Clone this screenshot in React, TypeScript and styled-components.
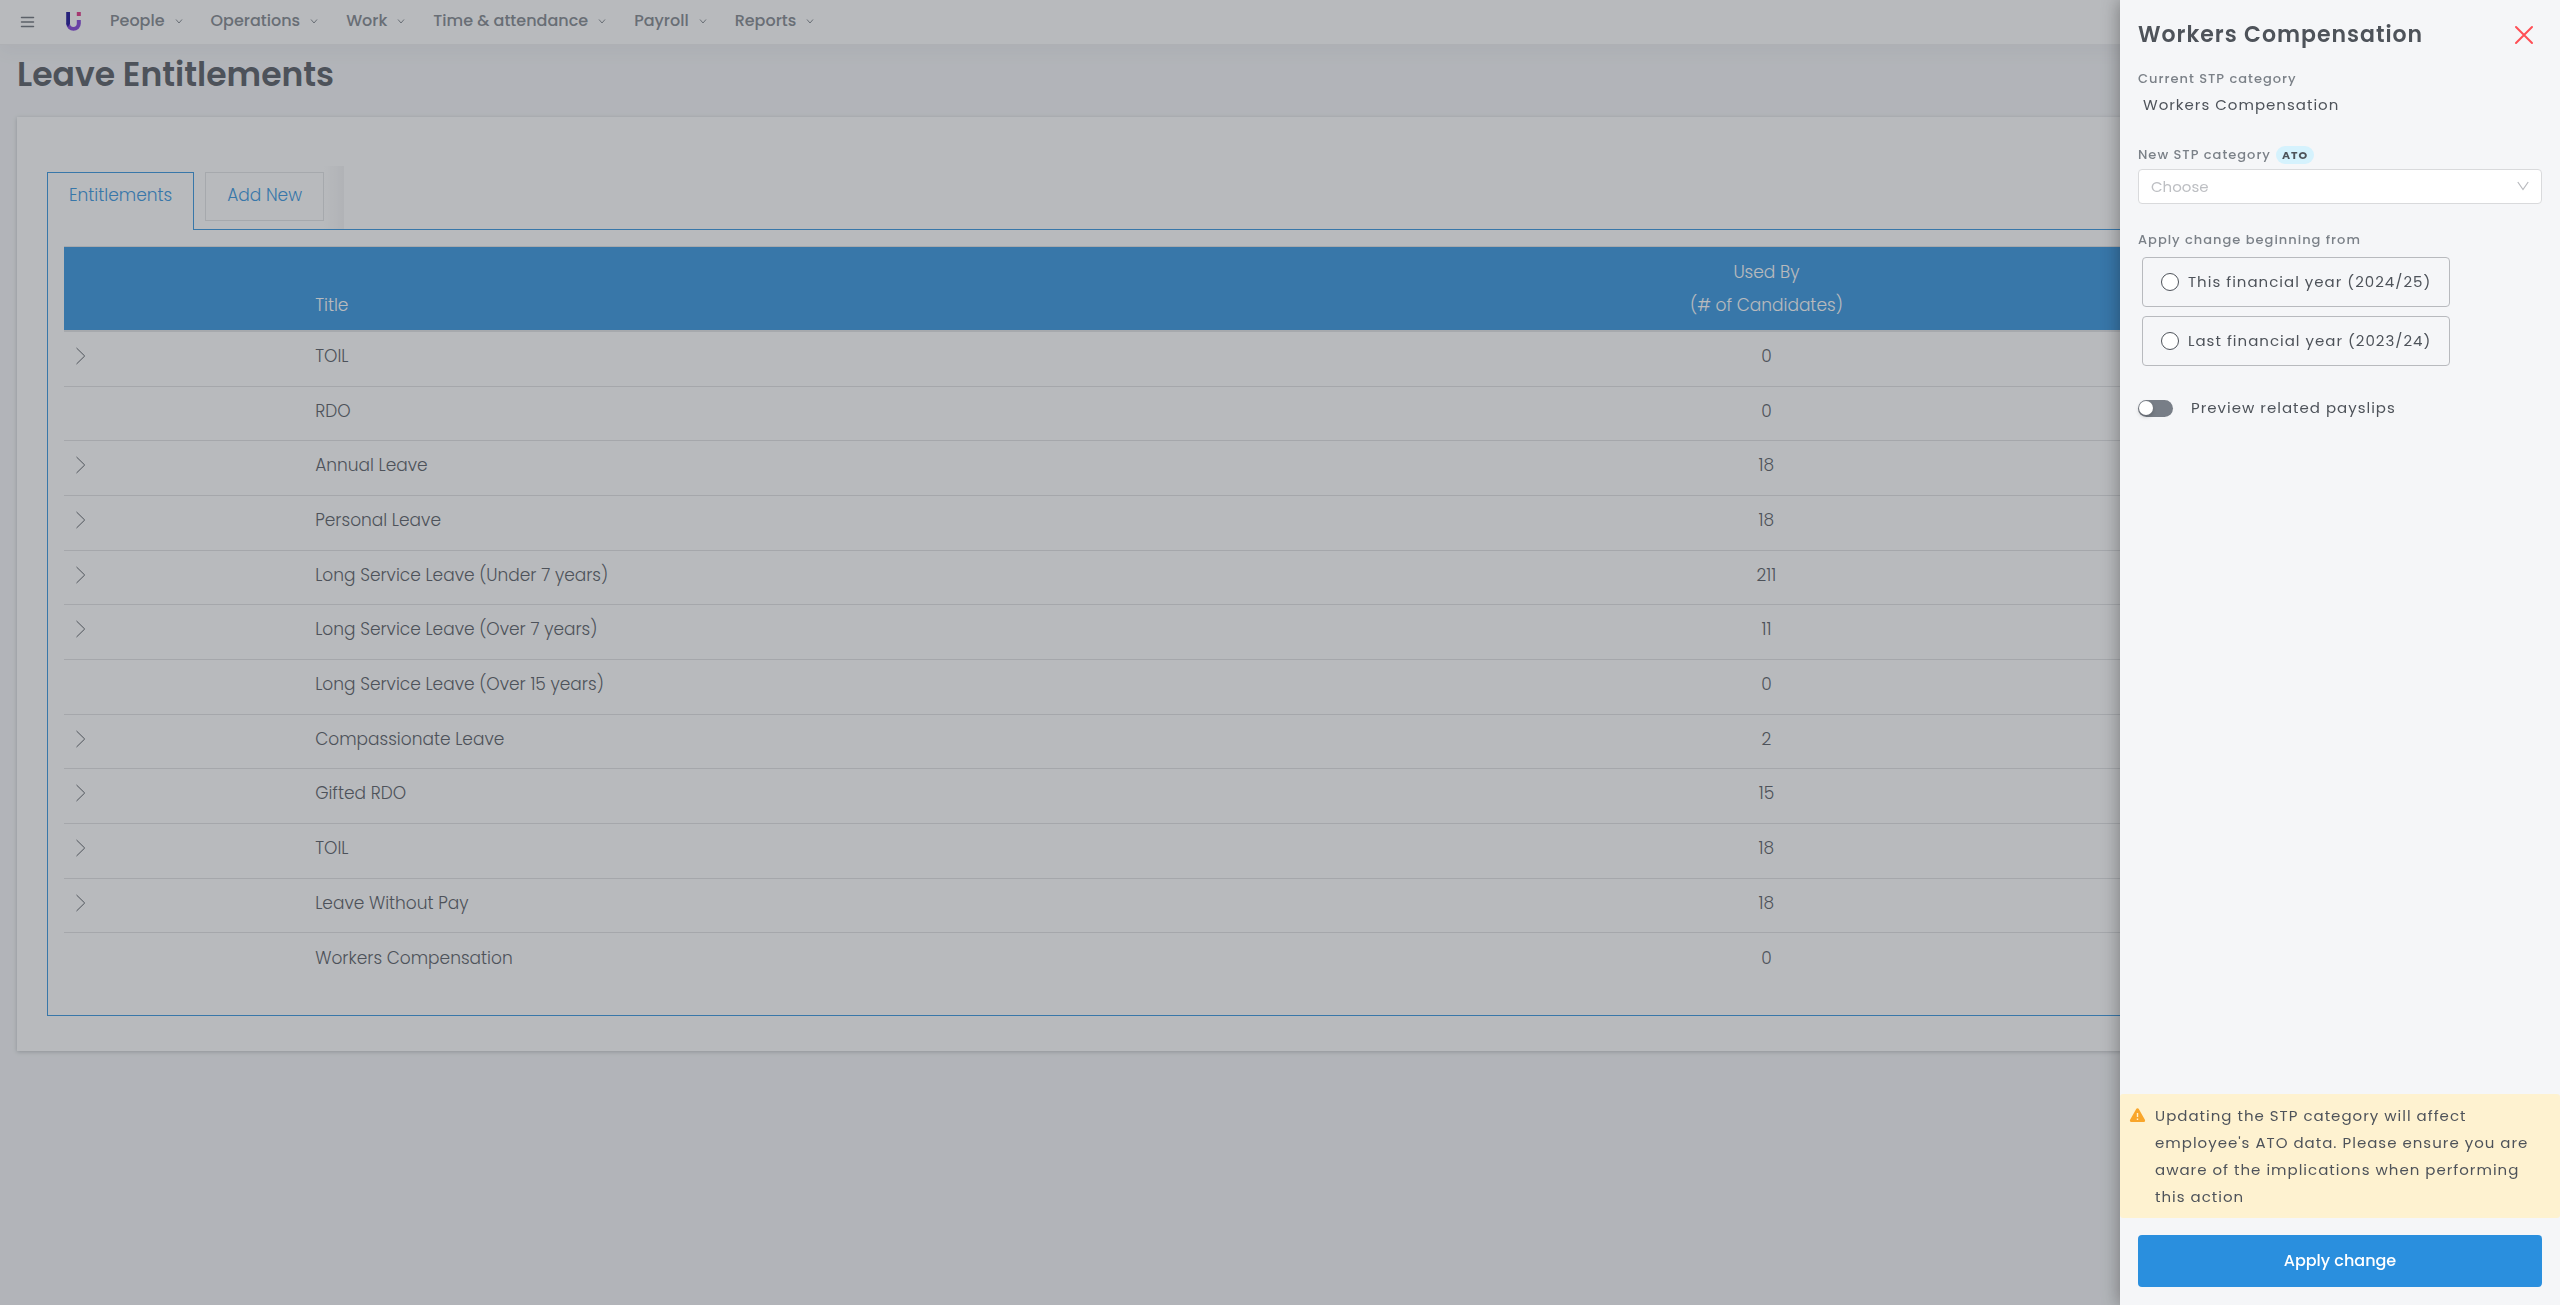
import React, { useState } from "react";
import styled, { createGlobalStyle } from "styled-components";

const color = {
  text: "#4e535a",
  muted: "#7b8188",
  surface: "#f5f6f8",
  blue: "#2a8fde",
  line: "#e2e3e5",
};

const GlobalStyle = createGlobalStyle`
  *, *::before, *::after { box-sizing: border-box; }
  body {
    margin: 0;
    background: ${color.surface};
    color: ${color.text};
    font-family: Poppins, Inter, "Noto Sans", sans-serif;
    font-size: 15px;
    line-height: 24px;
  }
  button, select, input { font: inherit; color: inherit; margin: 0; }
`;

const Page = styled.div`
  min-height: 100vh;
`;

const TopBar = styled.header`
  display: flex;
  align-items: center;
  height: 45px;
  padding-left: 20px;
  background: #fff;
  border-bottom: 1px solid #eeeff1;
  box-shadow: 0 8px 16px rgba(78, 83, 90, 0.05);
`;

const MenuButton = styled.button`
  display: flex;
  padding: 0;
  border: 0;
  background: none;
`;

const Brand = styled.a`
  display: flex;
  margin: 0 28px 0 31px;
`;

const Nav = styled.nav`
  display: flex;
  gap: 28px;
`;

const NavItem = styled.button`
  display: flex;
  align-items: center;
  gap: 10px;
  padding: 0 0 3px;
  border: 0;
  background: none;
  font-size: 16px;
  font-weight: 500;
  white-space: nowrap;
  color: ${color.muted};
`;

const Title = styled.h1`
  margin: 0;
  padding: 8px 17px 20px;
  font-size: 33px;
  line-height: 44px;
  font-weight: 600;
`;

const Card = styled.main`
  margin: 0 17px;
  padding: 49px 30px 35px;
  background: #fff;
  box-shadow: 0 1px 4px rgba(78, 83, 90, 0.35);
`;

const TabList = styled.div`
  display: flex;
  align-items: flex-end;
  margin-bottom: -1px;
`;

const Tab = styled.button<{ $active?: boolean }>`
  position: relative;
  align-self: flex-start;
  height: ${(p) => (p.$active ? "58px" : "49px")};
  margin: 6px ${(p) => (p.$active ? "11px" : "0")} 0 0;
  padding: 0 21px ${(p) => (p.$active ? "13px" : "4px")};
  border: 1px solid ${(p) => (p.$active ? color.blue : color.line)};
  ${(p) => p.$active && "border-bottom: 0;"}
  background: #fff;
  color: ${color.blue};
  font-size: 17px;
  font-weight: 300;
`;

const TabShade = styled.span`
  align-self: stretch;
  width: 20px;
  margin-bottom: 1px;
  background: linear-gradient(to right, #fff, #f3f3f4);
`;

const Panel = styled.section`
  padding: 16px 16px 27px;
  border: 1px solid ${color.blue};
`;

const Table = styled.table`
  width: 100%;
  table-layout: fixed;
  border-collapse: separate;
  border-spacing: 0;
  font-size: 17px;
  font-weight: 300;
`;

const Col = styled.col<{ $share: number }>`
  width: ${(p) => p.$share}%;
`;

const HeadCell = styled.th<{ $center?: boolean }>`
  padding: 9px 8px 8px;
  border-top: 1px solid ${color.line};
  border-bottom: 2px solid ${color.line};
  background: ${color.blue};
  color: #fff;
  font-weight: 300;
  line-height: 33px;
  vertical-align: bottom;
  text-align: ${(p) => (p.$center ? "center" : "left")};
`;

const Row = styled.tr`
  height: 55px;
  &:nth-child(3n + 2) { height: 54px; }
`;

const Cell = styled.td<{ $center?: boolean }>`
  padding: 0 8px 6px;
  border-bottom: 1px solid #dfe0e2;
  text-align: ${(p) => (p.$center ? "center" : "left")};
  ${Row}:last-child > & { border-bottom: 0; }
`;

const ExpandButton = styled.button`
  display: flex;
  padding: 0;
  border: 0;
  background: none;
`;

const Scrim = styled.div`
  position: fixed;
  inset: 0;
  background: rgba(78, 83, 90, 0.4);
`;

const Drawer = styled.aside`
  position: fixed;
  top: 0;
  right: 0;
  bottom: 0;
  display: flex;
  flex-direction: column;
  width: 440px;
  background: ${color.surface};
  box-shadow: -2px 0 16px rgba(0, 0, 0, 0.3);
`;

const DrawerBody = styled.div`
  flex: 1;
  display: flex;
  flex-direction: column;
  padding: 17px 18px;
`;

const DrawerHeader = styled.div`
  display: flex;
  justify-content: space-between;
  align-items: center;
  height: 36px;
  padding-right: 8px;
`;

const DrawerTitle = styled.h2`
  margin: 0;
  font-size: 22px;
  line-height: 36px;
  font-weight: 600;
  letter-spacing: 1px;
`;

const CloseButton = styled.button`
  display: flex;
  padding: 0;
  border: 0;
  background: none;
`;

const Caption = styled.div`
  display: flex;
  align-items: center;
  gap: 5px;
  font-size: 13px;
  line-height: 18px;
  font-weight: 500;
  letter-spacing: 1px;
  color: ${color.muted};
`;

const CurrentField = styled.div`
  margin: 17px 0 24px;
`;

const CurrentValue = styled.div`
  padding: 5px;
  letter-spacing: 1px;
`;

const Badge = styled.span`
  padding: 0 6px;
  border-radius: 9px;
  background: #d5f2fd;
  font-size: 11px;
  line-height: 18px;
  font-weight: 700;
  color: ${color.text};
`;

const SelectWrap = styled.div`
  position: relative;
  margin-top: 5px;
  svg { position: absolute; right: 13px; top: 12px; pointer-events: none; }
`;

const Select = styled.select`
  display: block;
  width: 100%;
  height: 35px;
  padding: 0 12px;
  border: 1px solid #d9dadc;
  border-radius: 4px;
  appearance: none;
  background: #fff;
  color: #bdbfc3;
`;

const YearField = styled.fieldset`
  display: flex;
  flex-direction: column;
  align-items: flex-start;
  gap: 9px;
  margin: 27px 0 0;
  padding: 0 4px;
  border: 0;
`;

const YearLegend = styled.legend`
  margin: 0 -4px 8px;
  padding: 0;
  font-size: 13px;
  line-height: 18px;
  font-weight: 500;
  letter-spacing: 1px;
  color: ${color.muted};
`;

const YearOption = styled.label`
  display: flex;
  align-items: center;
  gap: 9px;
  height: 50px;
  padding: 0 18px;
  border: 1px solid #b8babe;
  border-radius: 4px;
  letter-spacing: 1px;
`;

const Radio = styled.input`
  width: 18px;
  height: 18px;
  appearance: none;
  border: 1px solid ${color.text};
  border-radius: 50%;
  background: #fff;
  &:checked { border-width: 5px; }
`;

const SwitchRow = styled.label`
  display: flex;
  align-items: center;
  gap: 18px;
  margin-top: 30px;
  letter-spacing: 1px;
`;

const Switch = styled.input`
  display: flex;
  align-items: center;
  width: 35px;
  height: 17px;
  padding: 0 1px;
  appearance: none;
  border-radius: 9px;
  background: #787e87;
  &::before {
    content: "";
    width: 14px;
    height: 14px;
    border-radius: 50%;
    background: #fff;
    box-shadow: 0 2px 4px rgba(0, 0, 0, 0.2);
  }
  &:checked { justify-content: flex-end; background: ${color.blue}; }
`;

const Warning = styled.div`
  display: flex;
  align-items: flex-start;
  gap: 9px;
  padding: 8px 12px 8px 9px;
  border-radius: 3px;
  background: #fef2d0;
  letter-spacing: 1px;
  line-height: 27px;
  svg { flex: none; margin-top: 5px; }
`;

const WarningText = styled.p`
  margin: 0;
`;

const Footer = styled.div`
  padding: 17px 18px 18px;
`;

const ApplyButton = styled.button`
  display: block;
  width: 100%;
  height: 52px;
  border: 0;
  border-radius: 4px;
  background: ${color.blue};
  color: #fff;
  font-size: 16px;
  font-weight: 500;
`;

const menus = ["People", "Operations", "Work", "Time & attendance", "Payroll", "Reports"];

const rows = [
  { title: "TOIL", used: 0, expandable: true },
  { title: "RDO", used: 0, expandable: false },
  { title: "Annual Leave", used: 18, expandable: true },
  { title: "Personal Leave", used: 18, expandable: true },
  { title: "Long Service Leave (Under 7 years)", used: 211, expandable: true },
  { title: "Long Service Leave (Over 7 years)", used: 11, expandable: true },
  { title: "Long Service Leave (Over 15 years)", used: 0, expandable: false },
  { title: "Compassionate Leave", used: 2, expandable: true },
  { title: "Gifted RDO", used: 15, expandable: true },
  { title: "TOIL", used: 18, expandable: true },
  { title: "Leave Without Pay", used: 18, expandable: true },
  { title: "Workers Compensation", used: 0, expandable: false },
];

const years = ["This financial year (2024/25)", "Last financial year (2023/24)"];

export default function App() {
  const [year, setYear] = useState("");
  const [preview, setPreview] = useState(false);

  return (
    <>
      <GlobalStyle />
      <Page>
        <TopBar>
          <MenuButton aria-label="Menu">
            <svg width="15" height="12" viewBox="0 0 15 12" stroke="#666b73" strokeWidth="1.5" strokeLinecap="round">
              <path d="M1.5 1.5h12M1.5 6h12M1.5 10.5h12" />
            </svg>
          </MenuButton>
          <Brand href="#" aria-label="Home">
            <svg width="16" height="20" viewBox="0 0 16 20">
              <path d="M10.8 8h4v3.5a7.3 7.3 0 0 1-14.6 0l3.8-1v1a3.4 3.4 0 0 0 6.8 0z" fill="#7a36d8" />
              <path d="M0.2 0H4v11.5L2 15 0.2 12z" fill="#0d0391" />
              <path d="M10.8 0h4v4h-4z" fill="#e0287f" />
            </svg>
          </Brand>
          <Nav>
            {menus.map((name) => (
              <NavItem key={name}>
                {name}
                <svg width="8" height="8" viewBox="0 0 8 8" fill="none" stroke={color.muted} aria-hidden="true">
                  <path d="M1 2.5 4 6l3-3.5" />
                </svg>
              </NavItem>
            ))}
          </Nav>
        </TopBar>

        <Title>Leave Entitlements</Title>

        <Card>
          <TabList role="tablist">
            <Tab role="tab" aria-selected="true" $active>Entitlements</Tab>
            <Tab role="tab" aria-selected="false">Add New</Tab>
            <TabShade />
          </TabList>
          <Panel>
            <Table>
              <colgroup>
                <Col $share={10} />
                <Col $share={50} />
                <Col $share={20} />
                <Col $share={20} />
              </colgroup>
              <thead>
                <tr>
                  <HeadCell />
                  <HeadCell>Title</HeadCell>
                  <HeadCell $center>
                    Used By
                    <br />
                    (# of Candidates)
                  </HeadCell>
                  <HeadCell />
                </tr>
              </thead>
              <tbody>
                {rows.map((row, i) => (
                  <Row key={i}>
                    <Cell>
                      {row.expandable && (
                        <ExpandButton aria-label={`Expand ${row.title}`}>
                          <svg width="16" height="18" viewBox="0 0 16 18" fill="none" stroke={color.text}>
                            <path d="M4.5 1l8.2 8-8.2 8" />
                          </svg>
                        </ExpandButton>
                      )}
                    </Cell>
                    <Cell>{row.title}</Cell>
                    <Cell $center>{row.used}</Cell>
                    <Cell />
                  </Row>
                ))}
              </tbody>
            </Table>
          </Panel>
        </Card>
      </Page>

      <Scrim />

      <Drawer aria-label="Workers Compensation">
        <DrawerBody>
          <DrawerHeader>
            <DrawerTitle>Workers Compensation</DrawerTitle>
            <CloseButton aria-label="Close">
              <svg width="20" height="20" viewBox="0 0 20 20" stroke="#ff4f55" strokeWidth="2" strokeLinecap="round">
                <path d="M2 2l16 16M18 2 2 18" />
              </svg>
            </CloseButton>
          </DrawerHeader>

          <CurrentField>
            <Caption>Current STP category</Caption>
            <CurrentValue>Workers Compensation</CurrentValue>
          </CurrentField>

          <Caption>
            <label htmlFor="category">New STP category</label>
            <Badge>ATO</Badge>
          </Caption>
          <SelectWrap>
            <Select id="category" defaultValue="">
              <option value="">Choose</option>
            </Select>
            <svg width="12" height="10" viewBox="0 0 12 10" fill="none" stroke="#b8babe" strokeWidth="1.2" aria-hidden="true">
              <path d="M0.8 1 6 8.5 11.2 1" />
            </svg>
          </SelectWrap>

          <YearField>
            <YearLegend>Apply change beginning from</YearLegend>
            {years.map((name) => (
              <YearOption key={name}>
                <Radio type="radio" name="year" checked={year === name} onChange={() => setYear(name)} />
                {name}
              </YearOption>
            ))}
          </YearField>

          <SwitchRow>
            <Switch type="checkbox" role="switch" checked={preview} onChange={() => setPreview(!preview)} />
            Preview related payslips
          </SwitchRow>
        </DrawerBody>

        <Warning role="alert">
          <svg width="17" height="17" viewBox="0 0 17 17">
            <path d="M8.5 2.8 14.6 13.6H2.4z" fill="#f9a62b" stroke="#f9a62b" strokeWidth="3" strokeLinejoin="round" />
            <path d="M8.5 6v4M8.5 11.6v1.4" stroke="#fef2d0" strokeWidth="1.4" />
          </svg>
          <WarningText>
            Updating the STP category will affect employee's ATO data. Please ensure you are aware of the
            implications when performing this action
          </WarningText>
        </Warning>

        <Footer>
          <ApplyButton>Apply change</ApplyButton>
        </Footer>
      </Drawer>
    </>
  );
}
